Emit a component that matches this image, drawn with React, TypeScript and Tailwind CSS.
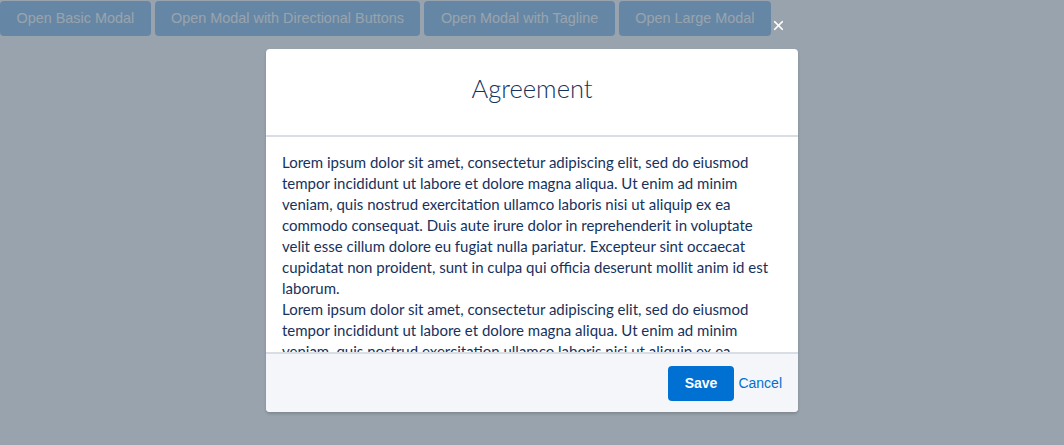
import { X } from "lucide-react";

const lorem =
  "Lorem ipsum dolor sit amet, consectetur adipiscing elit, sed do eiusmod tempor incididunt ut labore et dolore magna aliqua. Ut enim ad minim veniam, quis nostrud exercitation ullamco laboris nisi ut aliquip ex ea commodo consequat. Duis aute irure dolor in reprehenderit in voluptate velit esse cillum dolore eu fugiat nulla pariatur. Excepteur sint occaecat cupidatat non proident, sunt in culpa qui officia deserunt mollit anim id est laborum.";

const triggers = [
  "Open Basic Modal",
  "Open Modal with Directional Buttons",
  "Open Modal with Tagline",
  "Open Large Modal",
];

export default function App() {
  return (
    <div className="relative h-[445px] w-full overflow-hidden bg-white font-['Liberation_Sans',Arial,sans-serif]">
      {/* page behind the modal */}
      <div className="flex gap-1 pt-px">
        {triggers.map((t) => (
          <button
            key={t}
            className="h-[35px] rounded bg-[#0070d2] px-[16.5px] text-[14.4px] text-white"
          >
            {t}
          </button>
        ))}
      </div>

      {/* backdrop */}
      <div className="absolute inset-0 bg-[rgba(126,140,153,0.8)]" />

      {/* modal */}
      <div className="absolute inset-0 flex justify-center pt-[49px]">
        <div className="relative flex h-[363px] w-[532px] flex-col rounded bg-white shadow-[0_2px_3px_rgba(0,0,0,0.16)]">
          <button className="absolute -top-[32px] right-[12px] flex h-4 w-4 items-center justify-center text-white">
            <X className="h-[15px] w-[15px]" strokeWidth={2.75} />
          </button>

          <div className="flex h-[88px] shrink-0 items-center justify-center border-b-2 border-[#d8dde6] pb-[8px]">
            <h2 className="font-['Lato',sans-serif] text-[25.5px] font-light text-[#16325c]">
              Agreement
            </h2>
          </div>

          <div className="flex-1 overflow-hidden px-4 pt-[15px] font-['Lato',sans-serif] text-[15px] leading-[21px] text-[#16325c]">
            <p>{lorem}</p>
            <p>{lorem}</p>
          </div>

          <div className="flex h-[60px] shrink-0 items-center justify-end gap-1 rounded-b border-t-2 border-[#d8dde6] bg-[#f4f6f9] px-4">
            <button className="h-[35px] rounded bg-[#0070d2] px-[17px] text-sm font-bold text-white">
              Save
            </button>
            <a href="#" className="text-sm text-[#0070d2]">
              Cancel
            </a>
          </div>
        </div>
      </div>
    </div>
  );
}
